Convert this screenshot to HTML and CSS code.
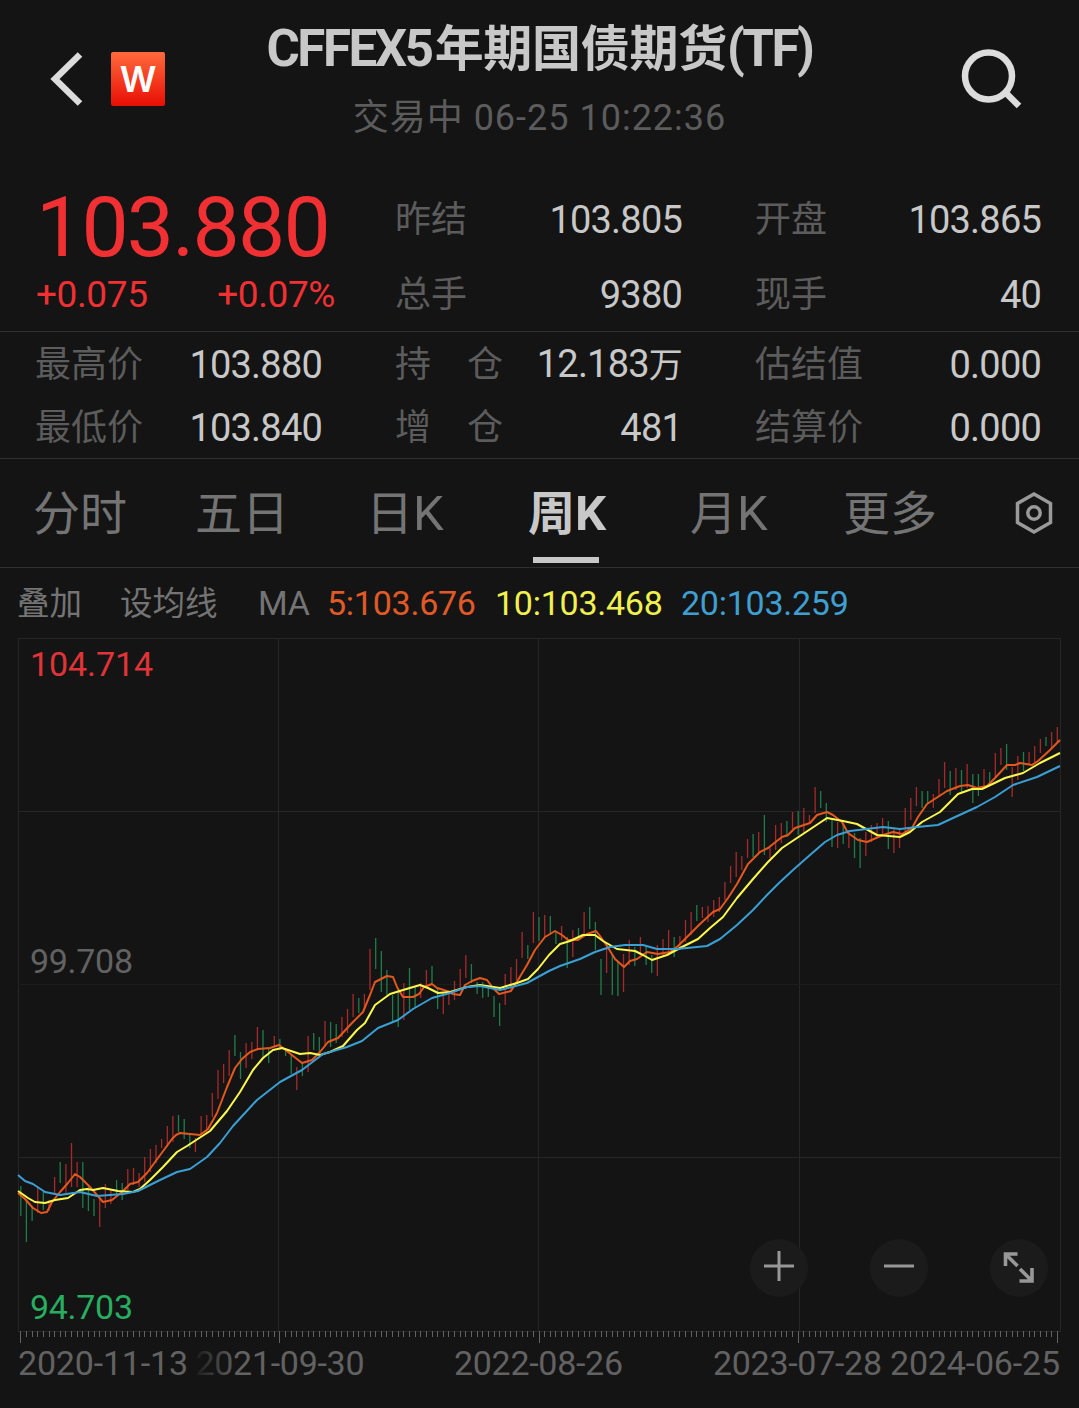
FILE: index.html
```html
<!doctype html>
<html lang="zh-CN">
  <head>
    <meta charset="utf-8">
    <meta name="viewport" content="width=device-width, initial-scale=1">
    <link rel="stylesheet" href="styles.css">
    <title>CFFEX5年期国债期货(TF)</title>
  </head>
  <body>
    <header class="header">
      <div class="header-left">
        <svg class="back" width="34" height="56" viewBox="0 0 34 56"><path d="M31 3.500L6 28l25 24.500"/></svg>
        <div class="logo"><span>W</span></div>
      </div>
      <div class="header-title">
        <h1><span class="latin">CFFEX5</span><span class="name">年期国债期货</span><span class="latin tail">(TF)</span></h1>
        <p>交易中 <span>06-25</span> <span>10:22:36</span></p>
      </div>
      <svg class="search" width="62" height="62" viewBox="0 0 62 62">
        <circle cx="28.500" cy="28" r="23.500"/>
        <path d="M46 45l13 13"/>
      </svg>
    </header>

    <section class="quote">
      <div class="price">
        <div class="last">103.880</div>
        <div class="change"><span>+0.075</span><span>+0.07%</span></div>
      </div>
      <div class="cell"><span class="label">昨结</span><span class="value">103.805</span></div>
      <div class="cell"><span class="label">开盘</span><span class="value">103.865</span></div>
      <div class="cell"><span class="label">总手</span><span class="value">9380</span></div>
      <div class="cell"><span class="label">现手</span><span class="value">40</span></div>
    </section>

    <section class="detail">
      <div class="cell"><span class="label">最高价</span><span class="value">103.880</span></div>
      <div class="cell"><span class="label wide">持<i></i>仓</span><span class="value">12.183<small>万</small></span></div>
      <div class="cell"><span class="label">估结值</span><span class="value">0.000</span></div>
      <div class="cell"><span class="label">最低价</span><span class="value">103.840</span></div>
      <div class="cell"><span class="label wide">增<i></i>仓</span><span class="value">481</span></div>
      <div class="cell"><span class="label">结算价</span><span class="value">0.000</span></div>
    </section>

    <nav class="tabs">
      <a>分时</a>
      <a>五日</a>
      <a class="k">日<b>K</b></a>
      <a class="k active">周<b>K</b></a>
      <a class="k">月<b>K</b></a>
      <a>更多</a>
      <svg class="settings" width="40" height="44" viewBox="0 0 40 44">
        <path d="M20 3l16.500 9.500v19L20 41 3.500 31.500v-19z"/>
        <circle cx="20" cy="22" r="6.200"/>
      </svg>
    </nav>

    <div class="indicators">
      <span class="cjk">叠加</span>
      <span class="cjk lines">设均线</span>
      <span class="ma">MA</span>
      <span class="ma5">5:103.676</span>
      <span class="ma10">10:103.468</span>
      <span class="ma20">20:103.259</span>
    </div>

    <svg class="chart" width="1079" height="770" viewBox="0 638 1079 770">
      <defs>
        <linearGradient id="fade" gradientUnits="userSpaceOnUse" x1="190" y1="0" x2="238" y2="0">
          <stop offset="0" stop-color="#141414"/>
          <stop offset="1" stop-color="#626262"/>
        </linearGradient>
      </defs>
      <path class="grid" d="M18.500 638.500H1060.500V1331.500H18.500zM18 811.500H1060M18 1157.500H1060M278.500 638V1331M538.500 638V1331M799.500 638V1331"/>
      <path class="grid faint" d="M18 984.500H1060"/>
      <g id="candles"></g>
      <polyline class="line line5" points="18,1193 25,1199 33,1208 41,1213 47,1212 52,1202 60,1192 68,1183 75,1174 80,1177 90,1187 103,1202 112,1200 122,1192 130,1184 138,1182 147,1173 158,1158 172,1139 176,1135 180,1133 200,1135 208,1129 217,1113 227,1087 235,1068 242,1059 250,1052 258,1049 270,1048 279,1045 283,1048 302,1063 312,1060 320,1052 328,1042 338,1038 352,1023 363,1012 370,995 375,982 387,976 393,977 397,987 403,997 413,997 419,994 424,987 432,984 437,988 447,991 453,994 460,995 465,985 472,981 480,978 487,980 493,988 499,994 511,991 518,980 527,965 535,950 545,937 555,931 562,935 568,940 578,940 587,934 596,931 600,936 607,946 615,959 624,967 630,961 637,959 647,952 658,954 670,952 678,946 688,936 700,924 713,912 720,909 728,898 737,884 748,864 760,852 768,848 782,837 788,835 795,828 810,823 817,815 827,812 833,815 842,822 848,833 858,840 867,842 883,835 893,832 902,834 912,828 918,817 927,804 947,791 960,786 968,785 977,788 987,786 995,778 1007,765 1015,765 1020,763 1032,765 1038,761 1050,750 1060,740"/>
      <polyline class="line line10" points="18,1191 28,1198 35,1202 45,1203 55,1200 68,1198 80,1190 87,1189 93,1190 103,1188 118,1191 133,1192 140,1189 150,1180 163,1167 177,1152 187,1146 210,1131 227,1111 240,1092 253,1070 263,1058 273,1050 282,1048 300,1054 310,1053 320,1055 330,1052 343,1046 357,1030 365,1023 375,1005 390,994 403,990 420,985 428,988 438,993 450,992 467,987 480,985 500,988 517,983 528,979 538,969 549,955 560,944 570,941 583,935 595,935 603,941 617,949 635,951 643,955 652,960 667,955 682,947 698,939 710,928 723,917 737,898 753,879 768,862 782,848 800,836 827,818 843,821 857,824 877,835 900,837 910,832 922,822 940,812 958,794 972,789 982,789 1005,778 1023,773 1040,763 1060,753"/>
      <polyline class="line line20" points="18,1175 25,1181 33,1184 45,1192 60,1195 80,1192 97,1196 123,1194 138,1191 160,1180 177,1172 190,1169 207,1157 220,1143 233,1126 257,1100 280,1082 302,1070 323,1054 347,1047 362,1041 378,1028 398,1020 413,1009 432,998 450,993 467,987 480,986 500,990 527,983 549,971 560,966 580,959 595,952 610,947 625,945 643,945 657,949 677,949 707,946 720,939 737,925 753,910 767,895 779,883 793,870 810,855 825,842 837,835 850,831 883,827 900,829 917,827 938,825 953,818 977,807 995,797 1013,785 1037,777 1060,766"/>
      <g class="scale">
        <text class="high" x="30" y="676" textLength="123">104.714</text>
        <text x="30" y="973" textLength="103">99.708</text>
        <text class="low" x="30" y="1319" textLength="103">94.703</text>
      </g>
      <path id="ticks" class="ticks"/>
      <g class="scale dates">
        <text x="18" y="1375" textLength="170">2020-11-13</text>
        <text x="195.500" y="1375" textLength="169" fill="url(#fade)">2021-09-30</text>
        <text x="454" y="1375" textLength="169">2022-08-26</text>
        <text x="713" y="1375" textLength="169">2023-07-28</text>
        <text x="890" y="1375" textLength="170">2024-06-25</text>
      </g>
      <g class="tools">
        <circle cx="779" cy="1268" r="29"/>
        <circle cx="899" cy="1268" r="29"/>
        <circle cx="1019" cy="1268" r="29"/>
        <path d="M764 1266H794M779 1251V1281M884 1266H914"/>
        <path class="expand" d="M1017.500 1254H1005.500V1266M1005.500 1254L1017.500 1266M1032 1268V1281H1019.500M1020 1269L1032 1281"/>
      </g>
    </svg>

    <script>
      // one week per entry: direction, high, low
      var weeks = ('g1186,1216 g1200,1242 g1207,1221 r1188,1213 g1192,1210 r1200,1211 r1177,1193 g1162,1183 r1164,1193 r1143,1187 ' +
        'r1162,1187 g1162,1208 g1187,1211 g1199,1216 r1198,1227 r1184,1208 r1190,1204 g1180,1197 g1183,1200 r1169,1190 ' +
        'r1168,1185 r1173,1187 r1157,1182 r1149,1172 r1145,1163 r1139,1148 r1126,1147 r1116,1142 g1115,1132 g1119,1139 ' +
        'g1135,1148 r1138,1152 r1116,1135 r1115,1133 r1093,1117 r1070,1099 r1064,1083 r1050,1076 g1035,1056 g1052,1079 ' +
        'r1043,1068 r1042,1059 r1027,1050 g1030,1057 g1047,1063 r1036,1047 g1039,1050 g1048,1056 g1055,1074 r1067,1090 ' +
        'g1063,1076 r1036,1072 g1033,1050 g1037,1053 r1021,1047 g1022,1047 g1024,1043 r1017,1037 r1009,1033 r994,1017 ' +
        'g998,1013 r994,1010 r949,990 g938,969 g951,992 g970,995 g995,1022 g990,1027 r983,1020 g968,1010 ' +
        'g987,1007 r983,998 r970,987 g966,983 g987,1009 r992,1014 r990,1005 r981,1000 r969,988 r955,978 ' +
        'g964,983 g982,994 g982,998 g985,997 g996,1017 g1003,1026 r974,1005 r967,990 r959,980 r932,958 ' +
        'g945,959 r912,943 g917,941 r915,937 g916,933 g932,944 r926,940 g937,968 r930,957 g928,940 ' +
        'r912,937 g907,929 g922,950 g959,995 r948,973 g955,995 g962,996 r954,992 r940,965 g947,966 ' +
        'r937,955 g947,965 g955,973 r945,976 r939,957 r930,953 g937,957 r936,950 r920,942 r912,935 ' +
        'g905,921 r907,918 r906,922 r900,917 r897,912 r882,900 r866,883 r852,877 r856,870 r839,858 ' +
        'g834,857 r832,853 g815,855 r847,858 r825,850 r823,843 g821,837 r812,832 g811,835 r808,833 ' +
        'r815,823 r787,813 g791,808 g803,822 g820,847 r822,848 g823,844 r830,848 g833,858 g838,868 ' +
        'r832,856 r825,842 r823,838 r818,835 g821,849 r828,853 r828,848 r808,833 r798,820 r787,806 ' +
        'g791,808 g791,803 r794,808 r779,797 r762,788 g771,795 r768,790 g770,792 r764,788 g774,803 ' +
        'g774,796 r769,787 g772,783 r753,778 r748,765 g744,770 r767,797 r756,780 g752,771 r752,765 ' +
        'r746,762 r739,753 g737,746 r732,748 r727,743').split(' ');
      var paths = { r: '', g: '' };
      var ticks = '';
      for (var i = 0; i < weeks.length; i++) {
        var x = (20.8 + i * 5.633).toFixed(1);
        var range = weeks[i].slice(1).split(',');
        paths[weeks[i][0]] += 'M' + x + ' ' + range[0] + 'V' + range[1];
        ticks += 'M' + (Math.floor(x) + 0.5) + ' 1331V' + (i % 46 ? 1337 : 1343);
      }
      document.getElementById('candles').innerHTML =
        '<path class="up" d="' + paths.r + '"/><path class="down" d="' + paths.g + '"/>';
      document.getElementById('ticks').setAttribute('d', ticks);
    </script>
  </body>
</html>
```
FILE: styles.css
```css
* {
  box-sizing: border-box;
}
body {
  margin: 0;
  width: 1079px;
  height: 1408px;
  overflow: hidden;
  background: #141414;
  color: #c8c8c8;
  font-family: Roboto, "Noto Sans CJK SC", sans-serif;
}
h1, p {
  margin: 0;
}
.header {
  display: grid;
  grid-template-columns: 200px 1fr 200px;
  height: 170px;
}
.header-left {
  display: flex;
  align-items: flex-start;
  padding: 51px 0 0 49px;
}
.back, .search, .settings {
  fill: none;
  stroke: #dcdcdc;
  stroke-width: 6.5;
}
.logo {
  width: 54px;
  height: 54px;
  margin: 1px 0 0 28px;
  border-radius: 2px;
  background: linear-gradient(#ff6a3c, #e90e04);
  color: #fff;
  font: 600 36px/54px Inter, sans-serif;
  text-align: center;
}
.logo span {
  display: block;
}
.header-title {
  text-align: center;
  white-space: nowrap;
}
.header-title h1 {
  display: flex;
  justify-content: center;
  height: 96px;
  font-size: 49px;
  line-height: 99px;
  font-weight: bold;
}
.header-title .name {
  letter-spacing: -.3px;
}
.header-title .latin {
  font-size: 51px;
  line-height: 97px;
  letter-spacing: -2.4px;
  margin-right: 3px;
}
.header-title .tail {
  margin: 0;
}
.header-title p {
  height: 44px;
  color: #5c5c5c;
  font-size: 36px;
  line-height: 44px;
  letter-spacing: 1px;
}
.search {
  margin: 48px 0 0 81px;
}
.quote {
  display: grid;
  grid-template-columns: 360px 360px 359px;
  grid-template-rows: 87px 74px;
  height: 161px;
}
.price {
  grid-row: 1 / 3;
  padding: 14px 0 0 36px;
  color: #f03033;
}
.last {
  height: 87px;
  font-size: 84px;
  line-height: 87px;
  letter-spacing: -1.8px;
}
.change {
  display: flex;
  justify-content: space-between;
  width: 299px;
  font-size: 37px;
  line-height: 48px;
  letter-spacing: -.4px;
}
.cell {
  display: flex;
  align-items: center;
  justify-content: space-between;
  padding: 2px 38px 0 35px;
}
.quote .cell {
  height: 74px;
}
.quote .cell:nth-child(-n+3) {
  height: 87px;
  padding-top: 13px;
}
.label {
  color: #5c5c5c;
  font-size: 36px;
  line-height: 40px;
}
.wide i {
  display: inline-block;
  width: 36px;
}
.value {
  font-size: 38px;
  line-height: 40px;
  letter-spacing: -.8px;
}
.value small {
  font-size: 34px;
}
.detail {
  display: grid;
  grid-template-columns: 360px 360px 359px;
  grid-template-rows: 63px 63px;
  height: 127px;
  border-top: 1px solid #303030;
}
.tabs {
  display: flex;
  height: 110px;
  padding-left: 33px;
  border-top: 1px solid #303030;
  border-bottom: 1px solid #303030;
  color: #747474;
  font-size: 47px;
  line-height: 109px;
}
.tabs a {
  position: relative;
  width: 162px;
  white-space: nowrap;
}
.tabs .k {
  padding-left: 9px;
}
.tabs b {
  font-size: 49px;
  line-height: 100px;
  font-weight: inherit;
}
.tabs .active {
  color: #c8c8c8;
  font-weight: bold;
}
.tabs .active::after {
  content: "";
  position: absolute;
  left: 14px;
  bottom: 4px;
  width: 66px;
  height: 6px;
  background: #c8c8c8;
}
.settings {
  margin: 32px 0 0 9px;
  stroke: #9a9a9a;
  stroke-width: 3.5;
}
.indicators {
  display: flex;
  align-items: baseline;
  height: 70px;
  padding-left: 17px;
  color: #747474;
  font-size: 34px;
  line-height: 70px;
  letter-spacing: -.25px;
  white-space: nowrap;
}
.cjk {
  width: 103px;
  font-size: 32.5px;
  letter-spacing: 0;
}
.lines {
  width: 138px;
}
.ma {
  width: 69px;
}
.ma5 {
  width: 168px;
  color: #e05a28;
}
.ma10 {
  width: 186px;
  color: #f0f050;
}
.ma20 {
  color: #3f9fd0;
}
.chart {
  display: block;
}
.grid {
  fill: none;
  stroke: #262626;
}
.faint {
  stroke: #1c1c1c;
}
.up, .down {
  stroke: #a52a2c;
  stroke-width: 1.3;
}
.down {
  stroke: #1f7d4c;
}
.line {
  fill: none;
  stroke-width: 2;
  stroke-linejoin: round;
}
.line5 {
  stroke: #e4571f;
}
.line10 {
  stroke: #fbf84c;
}
.line20 {
  stroke: #3a9fd4;
}
.scale {
  fill: #626262;
  font-size: 34px;
}
.high {
  fill: #e03438;
}
.low {
  fill: #27ae60;
}
.ticks {
  stroke: #626262;
}
.tools circle {
  fill: #1b1b1b;
}
.tools path {
  fill: none;
  stroke: #989898;
  stroke-width: 3;
}
.tools .expand {
  stroke-width: 3.6;
}
```
